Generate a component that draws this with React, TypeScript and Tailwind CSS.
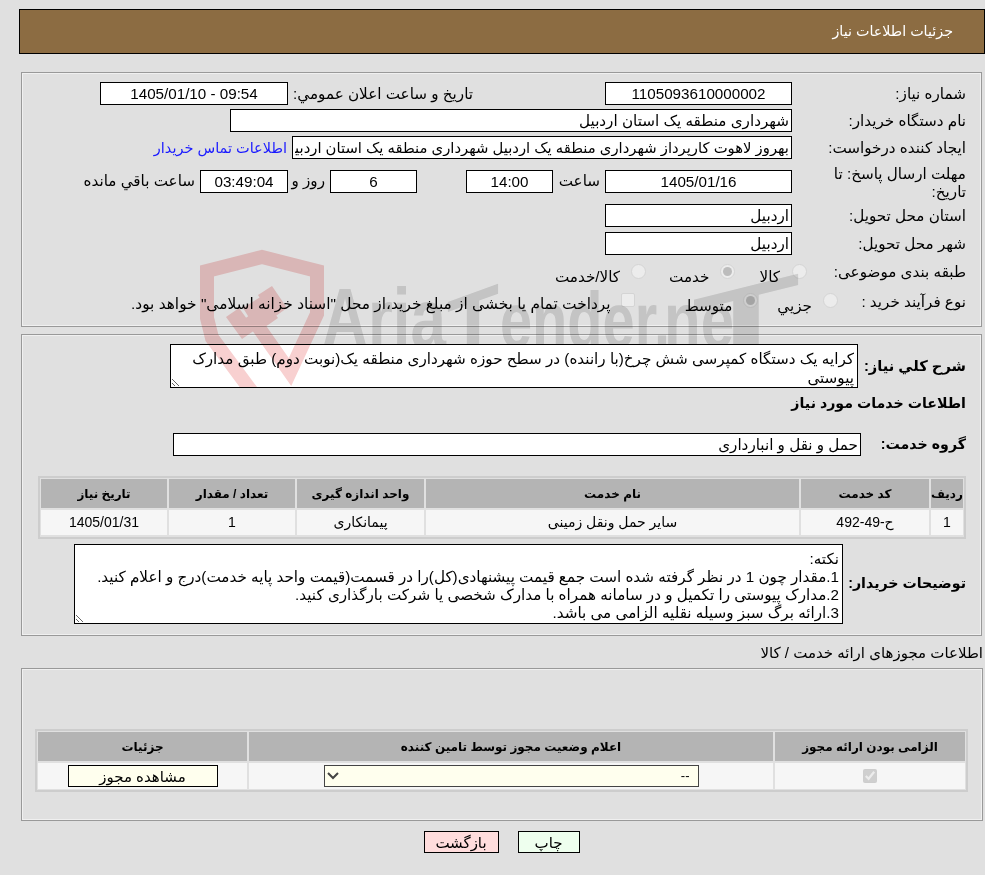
import React from 'react';

const field =
  'h-[23px] border border-black bg-white px-[2px] text-[15.2px] leading-[21px] text-black outline-none';

const panel = 'border border-[#999] shadow-[inset_0_0_0_1px_#f0f0f0]';

function Label({ children }: { children: React.ReactNode }) {
  return <div className="w-[174px] shrink-0 pt-[3px] text-[15.2px] leading-[18px]">{children}</div>;
}

function Radio({ checked }: { checked?: boolean }) {
  return (
    <span className="flex h-[15px] w-[15px] shrink-0 items-center justify-center rounded-full border border-[#d4d4d4] bg-[#ececec]">
      {checked && <span className="h-[9px] w-[9px] rounded-full bg-[#bcbcbc]" />}
    </span>
  );
}

function Watermark() {
  return (
    <svg
      className="pointer-events-none absolute left-0 top-0 mix-blend-multiply [direction:ltr]"
      width="985"
      height="875"
      viewBox="0 0 985 875"
    >
      <defs>
        <clipPath id="aboveBox">
          <rect x="0" y="240" width="985" height="104" />
        </clipPath>
        <clipPath id="shieldBox">
          <rect x="190" y="240" width="150" height="148" />
        </clipPath>
      </defs>
      <g clipPath="url(#shieldBox)" fill="none" stroke="#f8d0d0" strokeWidth="14">
        <path d="M252 392 L212 338 L207 318 L207 271 L262 257 L317 271 L317 314 L290 372 L250 315" />
        <g fill="#f8d0d0" stroke="none">
          <polygon points="226,317 239,308 255,330 242,339" />
          <polygon points="258,295 272,286 287,308 273,318" />
          <polygon points="243,308 262,296 278,318 258,332" />
        </g>
      </g>
      <g clipPath="url(#aboveBox)" fill="#dfdfdf" fontFamily="'Liberation Sans', sans-serif" fontWeight="700">
        <text x="322" y="347" fontSize="84" textLength="124" lengthAdjust="spacingAndGlyphs">
          Aria
        </text>
        <text transform="translate(447 347) skewY(-20)" x="0" y="16" fontSize="88" textLength="52" lengthAdjust="spacingAndGlyphs">
          T
        </text>
        <text x="500" y="347" fontSize="78" textLength="170" lengthAdjust="spacingAndGlyphs">
          ender.
        </text>
        <text x="664" y="347" fontSize="78" textLength="70" lengthAdjust="spacingAndGlyphs">
          ne
        </text>
        <text transform="translate(692 347) skewY(-14)" x="0" y="22" fontSize="100" textLength="108" lengthAdjust="spacingAndGlyphs">
          T
        </text>
      </g>
    </svg>
  );
}

const Th = ({ children, className }: { children: React.ReactNode; className: string }) => (
  <div className={`flex h-[29px] items-center justify-center bg-[#b4b4b4] text-[12px] font-bold ${className}`}>
    {children}
  </div>
);

const Td = ({ children, className, h }: { children: React.ReactNode; className: string; h: string }) => (
  <div className={`flex items-center justify-center bg-[#f6f6f6] text-[14px] ${h} ${className}`}>{children}</div>
);

export default function App() {
  return (
    <div
      dir="rtl"
      className="relative h-[875px] w-[985px] overflow-hidden bg-[#e0e0e0] pt-[9px] font-['Liberation_Sans','DejaVu_Sans',sans-serif] text-black"
    >
      {/* header */}
      <div className="mr-0 flex h-[45px] w-[966px] items-center border border-black bg-[#8c6c42] pr-[31px] text-[14.3px] text-white">
        جزئیات اطلاعات نیاز
      </div>

      {/* main panel */}
      <div className={`mr-[3px] mt-[18px] h-[255px] w-[961px] pr-[15px] pt-[9px] ${panel}`}>
        <div className="flex h-[23px] items-start">
          <Label>شماره نیاز:</Label>
          <input readOnly value="1105093610000002" dir="ltr" className={`${field} w-[187px] text-center`} />
          <div className="mr-[132px] w-[180px] shrink-0 whitespace-nowrap pt-[3px] text-[15.2px] leading-[18px]">تاریخ و ساعت اعلان عمومي:</div>
          <input readOnly value="1405/01/10 - 09:54" dir="ltr" className={`${field} mr-[5px] w-[188px] text-center`} />
        </div>
        <div className="mt-[4px] flex h-[23px] items-start">
          <Label>نام دستگاه خریدار:</Label>
          <input readOnly value="شهرداری منطقه یک استان اردبیل" className={`${field} w-[562px]`} />
        </div>
        <div className="mt-[4px] flex h-[23px] items-start">
          <Label>ایجاد کننده درخواست:</Label>
          <input
            readOnly
            value="بهروز لاهوت کارپرداز شهرداری منطقه یک اردبیل شهرداری منطقه یک استان اردبیل"
            className="h-[23px] w-[500px] border border-black bg-white px-[2px] text-[14.8px] leading-[21px] text-black outline-none"
          />
          <a className="mr-[5px] pt-[3px] text-[14.5px] leading-[18px] text-[#1a1aff]">اطلاعات تماس خریدار</a>
        </div>
        <div className="mt-[11px] flex h-[23px] items-start">
          <div className="-mt-[5px] w-[174px] shrink-0 pl-[16px] text-[15.2px] leading-[18px]">مهلت ارسال پاسخ: تا تاریخ:</div>
          <input readOnly value="1405/01/16" dir="ltr" className={`${field} h-[22px] w-[187px] text-center`} />
          <div className="mr-[5px] w-[47px] pt-[2px] text-[15.2px] leading-[18px]">ساعت</div>
          <input readOnly value="14:00" dir="ltr" className={`${field} h-[22px] w-[87px] text-center`} />
          <div className="w-[49px]" />
          <input readOnly value="6" dir="ltr" className={`${field} h-[22px] w-[87px] text-center`} />
          <div className="mr-[5px] w-[37px] pt-[2px] text-[15.2px] leading-[18px]">روز و</div>
          <input readOnly value="03:49:04" dir="ltr" className={`${field} h-[22px] w-[88px] bg-[#ffffee] text-center`} />
          <div className="mr-[5px] pt-[2px] text-[15.2px] leading-[18px]">ساعت باقي مانده</div>
        </div>
        <div className="mt-[11px] flex h-[23px] items-start">
          <Label>استان محل تحویل:</Label>
          <input readOnly value="اردبیل" className={`${field} h-[22px] w-[187px]`} />
        </div>
        <div className="mt-[5px] flex h-[23px] items-start">
          <Label>شهر محل تحویل:</Label>
          <input readOnly value="اردبیل" className={`${field} h-[22px] w-[187px]`} />
        </div>
        <div className="mt-[5px] flex h-[23px] items-start">
          <Label>طبقه بندی موضوعی:</Label>
          <div className="-mr-[15px] flex items-start pt-[4px] text-[15.2px] leading-[18px]">
            <Radio />
            <span className="mr-[12px] mt-[4px]">کالا</span>
            <span className="mr-[24px]">
              <Radio checked />
            </span>
            <span className="mr-[11px] mt-[4px]">خدمت</span>
            <span className="mr-[23px]">
              <Radio />
            </span>
            <span className="mr-[11px] mt-[4px]">کالا/خدمت</span>
          </div>
        </div>
        <div className="mt-[7px] flex h-[23px] items-start">
          <Label>نوع فرآیند خرید :</Label>
          <div className="-mr-[46px] flex items-start pt-[3px] text-[15.2px] leading-[18px]">
            <Radio />
            <span className="mr-[11px] mt-[4px]">جزيي</span>
            <span className="mr-[19px]">
              <Radio checked />
            </span>
            <span className="mr-[11px] mt-[4px]">متوسط</span>
            <span className="mr-[50px] h-[14px] w-[14px] rounded-[2px] border border-[#d4d4d4] bg-[#ececec]" />
            <span className="mr-[10px] mt-[2px] whitespace-nowrap text-[15.4px]">
              پرداخت تمام یا بخشی از مبلغ خرید،از محل &quot;اسناد خزانه اسلامی&quot; خواهد بود.
            </span>
          </div>
        </div>
      </div>

      {/* service panel */}
      <div className={`mr-[3px] mt-[7px] h-[302px] w-[961px] pr-[15px] pt-[9px] ${panel}`}>
        <div className="flex h-[44px] items-center">
          <div className="w-[108px] shrink-0 whitespace-nowrap text-[14.7px] font-bold">شرح كلي نياز:</div>
          <textarea
            readOnly
            value="کرایه یک دستگاه کمپرسی شش چرخ(با راننده) در سطح حوزه شهرداری منطقه یک(نوبت دوم) طبق مدارک پیوستی"
            className="h-[44px] w-[688px] overflow-hidden border border-black bg-white px-[3px] pt-[4px] text-[15.2px] leading-[19px] outline-none"
          />
        </div>
        <div className="mt-[6px] text-[14.2px] font-bold leading-[19px]">اطلاعات خدمات مورد نیاز</div>
        <div className="mt-[20px] flex h-[23px] items-center">
          <div className="w-[105px] shrink-0 whitespace-nowrap text-[14.2px] font-bold">گروه خدمت:</div>
          <input readOnly value="حمل و نقل و انبارداری" className={`${field} w-[688px]`} />
        </div>
        <div className="mt-[20px] flex h-[63px] w-[928px] flex-col gap-[2px] border-2 border-[#cdcdcd] p-[1px]">
          <div className="flex gap-[2px]">
            <Th className="w-[32px]">ردیف</Th>
            <Th className="w-[128px]">کد خدمت</Th>
            <Th className="w-[373px]">نام خدمت</Th>
            <Th className="w-[127px]">واحد اندازه گیری</Th>
            <Th className="w-[126px]">تعداد / مقدار</Th>
            <Th className="flex-1">تاریخ نیاز</Th>
          </div>
          <div className="flex gap-[2px]">
            <Td h="h-[25px]" className="w-[32px]">1</Td>
            <Td h="h-[25px]" className="w-[128px]">ح-49-492</Td>
            <Td h="h-[25px]" className="w-[373px]">سایر حمل ونقل زمینی</Td>
            <Td h="h-[25px]" className="w-[127px]">پیمانکاری</Td>
            <Td h="h-[25px]" className="w-[126px]">1</Td>
            <Td h="h-[25px]" className="flex-1">1405/01/31</Td>
          </div>
        </div>
        <div className="mt-[5px] flex h-[80px] items-center">
          <div className="w-[123px] shrink-0 whitespace-nowrap text-[14.2px] font-bold">توضیحات خریدار:</div>
          <textarea
            readOnly
            value={
              'نکته:\n1.مقدار چون 1 در نظر گرفته شده است جمع قیمت پیشنهادی(کل)را در قسمت(قیمت واحد پایه خدمت)درج و اعلام کنید.\n2.مدارک پیوستی را تکمیل و در سامانه همراه با مدارک شخصی یا شرکت بارگذاری کنید.\n3.ارائه برگ سبز وسیله نقلیه الزامی می باشد.'
            }
            className="h-[80px] w-[769px] overflow-hidden border border-black bg-white px-[3px] pt-[5px] text-[15.2px] leading-[18px] outline-none"
          />
        </div>
      </div>

      <div className="mr-[2px] mt-[8px] h-[18px] text-[15px] leading-[18px]">اطلاعات مجوزهای ارائه خدمت / کالا</div>

      {/* permits panel */}
      <div className={`mr-[2px] mt-[6px] h-[153px] w-[962px] pr-[14px] pt-[60px] ${panel}`}>
        <div className="flex h-[63px] w-[933px] flex-col gap-[2px] border-2 border-[#cdcdcd] p-[1px]">
          <div className="flex gap-[2px]">
            <Th className="w-[190px]">الزامی بودن ارائه مجوز</Th>
            <Th className="w-[524px]">اعلام وضعیت مجوز توسط تامین کننده</Th>
            <Th className="flex-1">جزئیات</Th>
          </div>
          <div className="flex gap-[2px]">
            <Td h="h-[26px]" className="w-[190px]">
              <input type="checkbox" checked disabled readOnly className="h-[14px] w-[14px]" />
            </Td>
            <Td h="h-[26px]" className="w-[524px]">
              <div className="relative">
                <select
                  disabled
                  className="h-[22px] w-[375px] appearance-none rounded-none border border-[#444] bg-[#ffffee] px-[8px] text-[13px] text-black opacity-100"
                >
                  <option>--</option>
                </select>
                <svg
                  className="pointer-events-none absolute left-[3px] top-[6px]"
                  width="12"
                  height="10"
                  viewBox="0 0 12 10"
                  fill="none"
                  stroke="#444"
                  strokeWidth="2"
                >
                  <path d="M1 2 L6 7 L11 2" />
                </svg>
              </div>
            </Td>
            <Td h="h-[26px]" className="flex-1">
              <button className="h-[22px] w-[150px] border border-black bg-[#ffffee] text-[15px]">مشاهده مجوز</button>
            </Td>
          </div>
        </div>
      </div>

      <div className="mt-[10px] flex justify-center gap-[19px] pl-[18px]">
        <button className="h-[22px] w-[62px] border border-black bg-[#eeffee] text-[15px]">چاپ</button>
        <button className="h-[22px] w-[75px] border border-black bg-[#ffdddd] text-[15px]">بازگشت</button>
      </div>

      <Watermark />
    </div>
  );
}
